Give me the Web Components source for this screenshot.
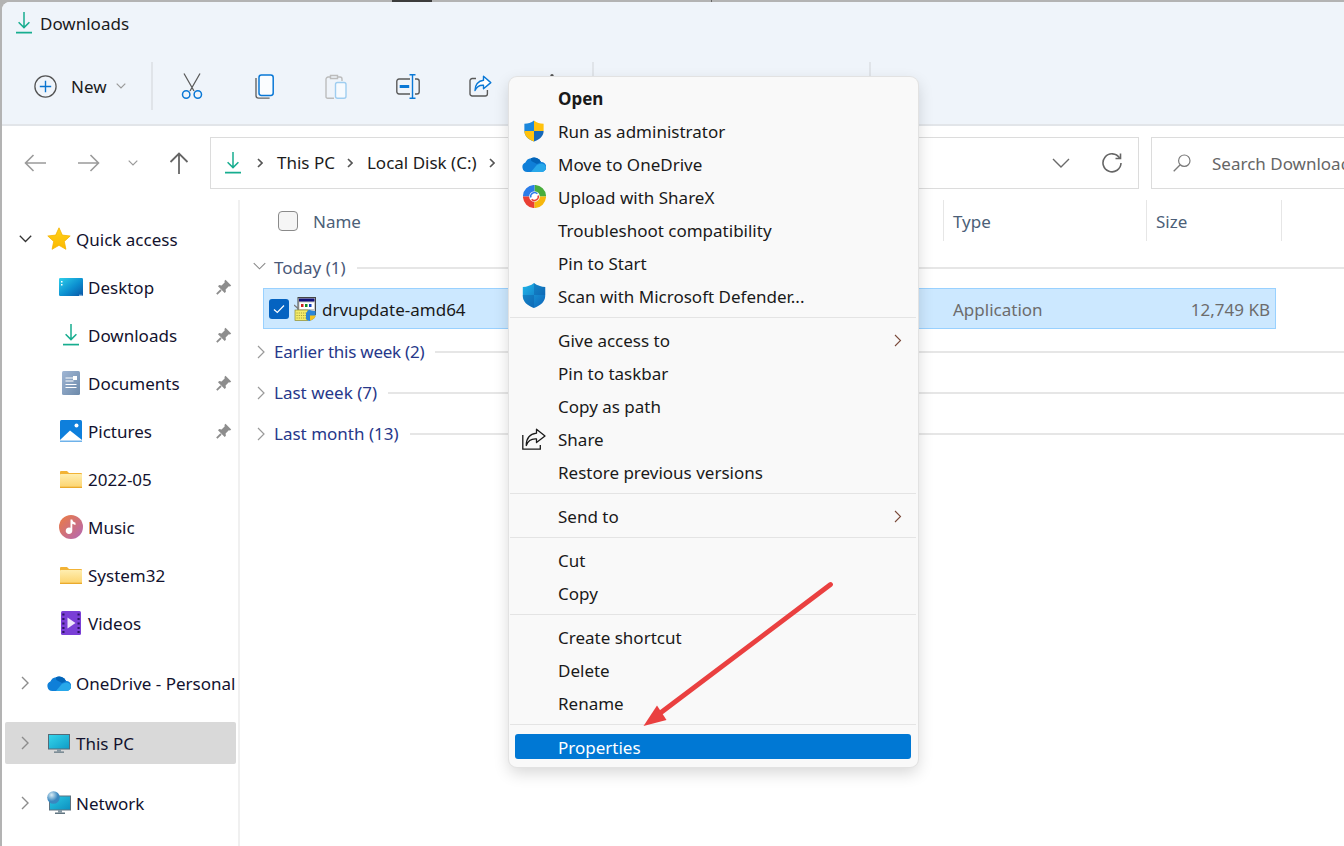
<!DOCTYPE html>
<html lang="en"><head><meta charset="utf-8"><title>Downloads</title>
<style>
html,body{margin:0;padding:0;background:#fff;overflow:hidden}
body{font-family:"Noto Sans","Open Sans",sans-serif;font-size:17px;color:#1a1a1a}
</style></head><body>
<win-window>
  <win-titlebar slot="top">Downloads</win-titlebar>
  <win-toolbar slot="top">
    <new-button>New</new-button>
    <tool-sep></tool-sep>
    <tool-button icon="cut"></tool-button>
    <tool-button icon="copy"></tool-button>
    <tool-button icon="paste"></tool-button>
    <tool-button icon="rename"></tool-button>
    <tool-button icon="share"></tool-button>
    <tool-button icon="dots"></tool-button>
    <tool-sep></tool-sep>
    <tool-gap></tool-gap>
    <tool-sep></tool-sep>
  </win-toolbar>
  <win-address slot="top"></win-address>
  <nav-tree slot="side">
    <tree-row level="0" exp="open" icon="star">Quick access</tree-row>
    <tree-row level="1" icon="desktop" pin>Desktop</tree-row>
    <tree-row level="1" icon="dl" pin>Downloads</tree-row>
    <tree-row level="1" icon="doc" pin>Documents</tree-row>
    <tree-row level="1" icon="pics" pin>Pictures</tree-row>
    <tree-row level="1" icon="folder">2022-05</tree-row>
    <tree-row level="1" icon="music">Music</tree-row>
    <tree-row level="1" icon="folder">System32</tree-row>
    <tree-row level="1" icon="video">Videos</tree-row>
    <tree-row level="0" exp="closed" icon="cloud" gap>OneDrive - Personal</tree-row>
    <tree-row level="0" exp="closed" icon="pc" gap selected>This PC</tree-row>
    <tree-row level="0" exp="closed" icon="net" gap>Network</tree-row>
  </nav-tree>
  <file-list slot="main">
    <list-header></list-header>
    <group-row open>Today (1)</group-row>
    <file-row name="drvupdate-amd64" type="Application" size="12,749 KB"></file-row>
    <group-row dark style="letter-spacing:-.24px">Earlier this week (2)</group-row>
    <group-row dark>Last week (7)</group-row>
    <group-row dark>Last month (13)</group-row>
  </file-list>
  <ctx-menu slot="over">
    <ctx-item bold>Open</ctx-item>
    <ctx-item icon="uac">Run as administrator</ctx-item>
    <ctx-item icon="cloud">Move to OneDrive</ctx-item>
    <ctx-item icon="sharex">Upload with ShareX</ctx-item>
    <ctx-item>Troubleshoot compatibility</ctx-item>
    <ctx-item>Pin to Start</ctx-item>
    <ctx-item icon="defender">Scan with Microsoft Defender...</ctx-item>
    <ctx-sep></ctx-sep>
    <ctx-item sub>Give access to</ctx-item>
    <ctx-item>Pin to taskbar</ctx-item>
    <ctx-item>Copy as path</ctx-item>
    <ctx-item icon="sharek">Share</ctx-item>
    <ctx-item>Restore previous versions</ctx-item>
    <ctx-sep></ctx-sep>
    <ctx-item sub>Send to</ctx-item>
    <ctx-sep></ctx-sep>
    <ctx-item>Cut</ctx-item>
    <ctx-item>Copy</ctx-item>
    <ctx-sep></ctx-sep>
    <ctx-item>Create shortcut</ctx-item>
    <ctx-item>Delete</ctx-item>
    <ctx-item>Rename</ctx-item>
    <ctx-sep></ctx-sep>
    <ctx-item active>Properties</ctx-item>
  </ctx-menu>
  <annot-arrow slot="over"></annot-arrow>
</win-window>
<script>
const ICONS={
dl:[16,22,`<path d="M8 0v15.5M2.6 10.2 8 15.6l5.4-5.4" fill="none" stroke="#17ad8f" stroke-width="1.5"/><path d="M0 20.6h16" stroke="#17ad8f" stroke-width="1.7"/>`],
plus:[23,23,`<circle cx="11.5" cy="11.5" r="10.6" fill="none" stroke="#555" stroke-width="1.3"/><path d="M11.5 5.8v11.4M5.8 11.5h11.4" stroke="#0a74cf" stroke-width="1.4"/>`],
cut:[22,26,`<path d="M3 0.5 13 18M19 0.5 9 18" fill="none" stroke="#5c5c5c" stroke-width="1.3"/><circle cx="5.2" cy="21.5" r="3.7" fill="none" stroke="#0a78d6" stroke-width="1.5"/><circle cx="16.8" cy="21.5" r="3.7" fill="none" stroke="#0a78d6" stroke-width="1.5"/>`],
copy:[19,25,`<path d="M1 4v17.5a2.6 2.6 0 0 0 2.6 2.6h11" fill="none" stroke="#666" stroke-width="1.4"/><rect x="4" y="1" width="14.2" height="20.5" rx="2.4" fill="#fbfdff" stroke="#0a78d6" stroke-width="1.5"/>`],
paste:[22,25,`<path d="M5 3H3.2A2.2 2.2 0 0 0 1 5.2v17.5A1.6 1.6 0 0 0 2.6 24.3H9" fill="none" stroke="#bcbcbc" stroke-width="1.4"/><path d="M5.5 1.5h7v3h-7zM12.5 3H15a2 2 0 0 1 2 2v2" fill="none" stroke="#bcbcbc" stroke-width="1.4"/><rect x="10.5" y="8.5" width="10.5" height="15.8" rx="2" fill="#f6fafe" stroke="#9fcdf0" stroke-width="1.4"/>`],
rename:[24,25,`<path d="M14 5H3a2.2 2.2 0 0 0-2.2 2.2v10.6A2.2 2.2 0 0 0 3 20h11M19 5h2a2.2 2.2 0 0 1 2.2 2.2v10.6A2.2 2.2 0 0 1 21 20h-2" fill="none" stroke="#5a5a5a" stroke-width="1.4"/><path d="M16.5 1v23M13.5 0.8h6M13.5 24.2h6" fill="none" stroke="#0a78d6" stroke-width="1.4"/><rect x="3.7" y="11" width="9.5" height="3" fill="#0a78d6"/>`],
share:[23,22,`<path d="M7 3.5H3.2A2.2 2.2 0 0 0 1 5.7v13A2.2 2.2 0 0 0 3.2 21h13a2.2 2.2 0 0 0 2.2-2.2V15" fill="none" stroke="#5a5a5a" stroke-width="1.4"/><path d="M14.5 1.2 21.8 7.6 14.5 13.8V10.3C10.5 10 7.6 11.8 6 15.6 5.8 10 9.2 5.6 14.5 5.2Z" fill="#fff" stroke="#0a78d6" stroke-width="1.4" stroke-linejoin="round"/>`],
dots:[6,24,`<circle cx="3" cy="1.8" r="1.7" fill="#555"/><circle cx="3" cy="12" r="1.7" fill="#555"/><circle cx="3" cy="22" r="1.7" fill="#555"/>`],
back:[22,18,`<path d="M22 9H1.5M9.5 1 1.5 9l8 8" fill="none" stroke="#9a9a9a" stroke-width="1.6"/>`],
fwd:[22,18,`<path d="M0 9h20.5M12.5 1l8 8-8 8" fill="none" stroke="#9a9a9a" stroke-width="1.6"/>`],
up:[20,22,`<path d="M10 22V1.5M1.5 10 10 1.5 18.500 10" fill="none" stroke="#666" stroke-width="1.8"/>`],
cd:[10,6,`<path d="M.7.7 5 5 9.300.7" fill="none" stroke="#9a9a9a" stroke-width="1.2"/>`],
cdl:[18,11,`<path d="M1 1l8 8 8-8" fill="none" stroke="#6a6a6a" stroke-width="1.4"/>`],
crumb:[6,10,`<path d="M1 1l4 4-4 4" fill="none" stroke="#555" stroke-width="1.6"/>`],
refresh:[20,20,`<path d="M17.600 5A9 9 0 1 0 19 10" fill="none" stroke="#666" stroke-width="1.6"/><path d="M18.500 .5V5.500H13.500" fill="none" stroke="#666" stroke-width="1.6"/>`],
search:[18,18,`<circle cx="11.300" cy="6.700" r="5.700" fill="none" stroke="#7a7a7a" stroke-width="1.200"/><path d="M7.200 10.800.7 17.300" stroke="#7a7a7a" stroke-width="1.300"/>`],
star:[24,24,`<defs><linearGradient id="a" x1="0" y1="0" x2="0" y2="1"><stop offset="0" stop-color="#ffd21c"/><stop offset="1" stop-color="#fbb800"/></linearGradient></defs><path d="M12 .8 15.300 8.100 23.200 9 17.300 14.400 18.900 22.300 12 18.300 5.100 22.300 6.700 14.400.8 9 8.700 8.100Z" fill="url(#a)" stroke="#f5b400" stroke-width=".8" stroke-linejoin="round"/>`],
desktop:[24,18,`<defs><linearGradient id="a" x1="0" y1="0" x2="1" y2="1"><stop offset="0" stop-color="#2fd0ea"/><stop offset=".55" stop-color="#0c8fd0"/><stop offset="1" stop-color="#0a55a5"/></linearGradient></defs><rect width="24" height="18" rx="1.200" fill="url(#a)"/><rect x="2" y="3" width="1.500" height="1.500" fill="#fff"/><rect x="2" y="6" width="1.500" height="1.500" fill="#fff"/><rect x="20" y="16.800" width="3" height=".8" fill="#cfe8f5"/>`],
doc:[18,24,`<defs><linearGradient id="a" x1="0" y1="0" x2="1" y2="1"><stop offset="0" stop-color="#a0b6d4"/><stop offset="1" stop-color="#6d8aaa"/></linearGradient></defs><rect width="18" height="24" rx="1.500" fill="url(#a)"/><path d="M3.500 7h8M3.500 10h8M3.500 13.500h11M3.500 16.500h11" stroke="#fff" stroke-width="1"/><rect x="11" y="5" width="4" height="4" fill="#fff"/>`],
pics:[22,22,`<rect width="22" height="22" rx="1.500" fill="#0e7fdc"/><circle cx="16.500" cy="5.500" r="2" fill="#fff"/><path d="M0 20 10 10.500 22 20v2H0Z" fill="#fff"/><path d="M0 20.500 0 22h22v-1.500Z" fill="#0e7fdc" opacity=".6"/>`],
folder:[22,17,`<defs><linearGradient id="a" x1="0" y1="0" x2="0" y2="1"><stop offset="0" stop-color="#ffeeb0"/><stop offset="1" stop-color="#fcd36c"/></linearGradient></defs><path d="M0 1a1 1 0 0 1 1-1h6l2 2h12a1 1 0 0 1 1 1v3H0Z" fill="#f2b336"/><rect y="3" width="22" height="14" rx=".8" fill="url(#a)"/><rect y="15.700" width="22" height="1.300" fill="#eaaa2c"/>`],
music:[24,24,`<defs><linearGradient id="a" x1="0" y1="0" x2="1" y2="1"><stop offset="0" stop-color="#ee7c3e"/><stop offset="1" stop-color="#b267b8"/></linearGradient></defs><circle cx="12" cy="12" r="12" fill="url(#a)"/><path d="M11.500 4.500h1.800c.3 2 1.600 2.800 3.200 3.200v2.200c-1.300 0-2.500-.4-3.200-1.200v7a3.300 3.300 0 1 1-1.800-2.900Z" fill="#fff"/>`],
video:[20,24,`<rect width="20" height="24" rx="1.500" fill="#7a3fd6"/><path d="M2.400 2.500v2M2.400 7v2M2.400 11.500v2M2.400 16v2M2.400 20v2M17.600 2.500v2M17.600 7v2M17.600 11.500v2M17.600 16v2M17.600 20v2" stroke="#2e1468" stroke-width="2.200"/><path d="M6.500 6.500v11L14.500 12Z" fill="#eee6fb"/>`],
cloud:[24,16,`<path d="M5.200 16A4.900 4.900 0 0 1 3.400 6.600 6.600 6.600 0 0 1 9 2.200 7.600 7.600 0 0 1 19 6 5 5 0 0 1 19.500 16Z" fill="#0f7fd8"/><path d="M9 2.200A7.600 7.600 0 0 1 19 6L15 8 9.300 5Z" fill="#0364b8"/><path d="M9 16 15 8.800 19 7.500A4.500 4.500 0 0 1 24 11.500 4.500 4.500 0 0 1 19.500 16Z" fill="#28a8ea"/>`],
pc:[22,19,`<defs><linearGradient id="a" x1="0" y1="0" x2="1" y2="1"><stop offset="0" stop-color="#35d6ec"/><stop offset="1" stop-color="#0f9bc6"/></linearGradient></defs><rect x=".5" y=".5" width="21" height="14.500" fill="url(#a)" stroke="#546b78"/><rect x="9" y="15" width="4" height="2.500" fill="#8498a3"/><rect x="6" y="17.500" width="10" height="1.300" fill="#667a86"/>`],
net:[24,24,`<defs><linearGradient id="a" x1="0" y1="0" x2="1" y2="1"><stop offset="0" stop-color="#2cc9e4"/><stop offset="1" stop-color="#0c8fbf"/></linearGradient><radialGradient id="b" cx=".35" cy=".3"><stop offset="0" stop-color="#d8ecf5"/><stop offset="1" stop-color="#3a87bf"/></radialGradient></defs><rect x="2.500" y="5" width="21" height="14" fill="url(#a)" stroke="#5f7280"/><rect x="11" y="19" width="4" height="2.500" fill="#8498a3"/><rect x="8" y="21.500" width="10" height="1.500" fill="#607480"/><circle cx="6.500" cy="6.500" r="6.300" fill="url(#b)"/>`],
pin:[16,16,`<path d="M9.500.8 15.200 6.500 14 7.600 12.800 7.200 9.600 10.400 9.900 12.800 8.700 14 2 7.300 3.200 6.100 5.600 6.400 8.800 3.200 8.400 2Z" fill="#8d8d8d"/><path d="M5 11 .8 15.200" stroke="#8d8d8d" stroke-width="1.800"/>`],
uac:[24,24,`<path d="M12 .5C9 3 5.500 3.800 1.500 4v8c0 5.500 4.500 9.500 10.500 11.500Z" fill="#1c87dc"/><path d="M12 .5c3 2.500 6.500 3.300 10.500 3.500v8H12Z" fill="#ffc20e"/><path d="M1.500 12H12v11.500C6 21.500 1.500 17.500 1.500 12Z" fill="#ffc20e"/><path d="M12 12h10.500c0 5.500-4.500 9.500-10.500 11.500Z" fill="#1668b8"/>`],
sharex:[24,24,`<g fill="none" stroke-width="6.500"><path d="M12 3.200A8.800 8.800 0 0 1 20.800 12" stroke="#47ad3c"/><path d="M3.200 12A8.800 8.800 0 0 1 12 3.200" stroke="#2b7de9"/><path d="M12 20.800A8.800 8.800 0 0 1 3.200 12" stroke="#ea3f33"/><path d="M20.800 12A8.800 8.800 0 0 1 12 20.800" stroke="#f6b70d"/></g><circle cx="12" cy="12" r="4.800" fill="#fff"/><path d="M8.200 13A4 4 0 0 1 15 9.200" fill="none" stroke="#2b7de9" stroke-width="1.500"/><path d="M15.800 11A4 4 0 0 1 9 14.800" fill="none" stroke="#ea3f33" stroke-width="1.500"/>`],
defender:[24,25,`<defs><linearGradient id="a" x1="0" y1="0" x2="1" y2="1"><stop offset="0" stop-color="#1fb5e8"/><stop offset="1" stop-color="#0d62b8"/></linearGradient></defs><path d="M12 0C9 2.500 5 3.800.8 4v9c0 5.500 4.500 9.500 11.200 12 6.700-2.500 11.200-6.500 11.200-12V4C19 3.800 15 2.500 12 0Z" fill="url(#a)"/><path d="M12 0v12H.8v1c0 5.500 4.500 9.500 11.200 12V12h11.200V4C19 3.800 15 2.500 12 0Z" fill="#0a4f9e" opacity=".35"/>`],
sharek:[24,22,`<path d="M.8 7v14.200h17.500V17" fill="none" stroke="#1a1a1a" stroke-width="1.300"/><path d="M14.500 1.200 23 8 14.500 14.500V11C9.500 10.600 6 12.600 4.300 17.500 4.200 10.500 8 6 14.500 5.200Z" fill="none" stroke="#1a1a1a" stroke-width="1.300" stroke-linejoin="round"/>`],
exe:[22,24,`<rect x="4" y=".5" width="17.500" height="17" fill="#c9c9c9" stroke="#444"/><rect x="5" y="1.500" width="15.500" height="3" fill="#10107a"/><rect x="5.500" y="5.500" width="14.500" height="6.500" fill="#fff"/><rect x="7" y="7" width="2.500" height="3" fill="#d02020"/><rect x="11" y="7" width="2.500" height="3" fill="#108a20"/><rect x="15" y="7" width="2.500" height="3" fill="#1040c0"/><rect x="1" y="13" width="13" height="10.500" fill="#f4ec6a" stroke="#8a8a30" stroke-width=".7"/><path d="M2.500 16h10M2.500 18.500h10M2.500 21h10" stroke="#a5a040" stroke-dasharray="1.200 1"/><path d="M15 12.500c2 1.200 4 1.500 6.500 1.500v4c0 3-2.500 4.800-6 6-1.500-.5-2.500-1-3.500-1.800V16Z" fill="#2a86d8"/><path d="M16 14v4.500h5.500v1c-.8 2-2.900 3.300-5.500 4.300Z" fill="#f6c21c"/><path d="M0 8l4 3.500" stroke="#777" stroke-width="1.200"/>`]
};
const ICON_SIZE={uac:[22,22],sharex:[23,23]};
function def(name,css,html){
  customElements.define(name,class extends HTMLElement{
    constructor(){super();this.attachShadow({mode:'open'})}
    connectedCallback(){
      this.shadowRoot.innerHTML=`<style>${css}</style>`+(typeof html==='function'?html(this):html);
    }
  });
}
const ic=(n,extra='')=>{const i=ICONS[n],s=ICON_SIZE[n]||i;return `<svg width="${s[0]}" height="${s[1]}" viewBox="0 0 ${i[0]} ${i[1]}" style="display:block;flex:none;${extra}" aria-hidden="true">${i[2]}</svg>`};

def('win-window',`
:host{display:block;position:relative;width:1344px;height:846px;overflow:hidden;background:#b3b3b3}
.frame{position:absolute;inset:2px 0 0 2px;border-top-left-radius:8px;background:#fff;display:flex;flex-direction:column;overflow:hidden}
.body{flex:1;display:grid;grid-template-columns:238px 1fr;min-height:0}
.tick{position:absolute;top:0;left:392px;width:40px;height:2px;background:#3c3c3c}
.tick2{position:absolute;top:0;left:711px;width:1px;height:2px;background:#666}
`,`<div class="tick"></div><div class="tick2"></div><div class="frame"><slot name="top"></slot><div class="body"><slot name="side"></slot><slot name="main"></slot></div></div><slot name="over"></slot>`);

def('win-titlebar',`
:host{display:flex;align-items:center;gap:8px;height:43px;padding:0 0 0 14px;background:#eff4fa;font-size:17px;color:#1b1b1b;box-sizing:border-box}
`,()=>ic('dl','margin-top:-2px')+`<slot></slot>`);

def('win-toolbar',`
:host{display:flex;align-items:center;height:81px;background:#eff4fa;border-bottom:2px solid #e2e5e9;box-sizing:border-box;padding-top:3px}
`,`<slot></slot>`);
def('new-button',`
:host{display:flex;align-items:center;width:145px;flex:none;padding-left:32px;box-sizing:border-box;font-size:17px;color:#1b1b1b}
span{margin-left:14px;margin-right:9px}
`,()=>ic('plus')+`<span><slot></slot></span>`+ic('cd'));
def('tool-sep',`:host{display:block;width:2px;height:48px;background:#e0e4e9;flex:none;margin:0 3px 0 4px}`,``);
def('tool-gap',`:host{display:block;width:268px;flex:none}`,``);
def('tool-button',`
:host{display:flex;align-items:center;justify-content:center;width:72px;height:48px;flex:none}
`,el=>ic(el.getAttribute('icon')));

def('win-address',`
:host{display:flex;align-items:center;height:74px;padding-left:22px;background:#fff;box-sizing:border-box;color:#1b1b1b;font-size:17px}
.nav{display:flex;align-items:center;width:186px;flex:none}
.box{display:flex;align-items:center;height:52px;border:1.5px solid #dcdcdc;box-sizing:border-box;background:#fff;flex:none}
.addr{width:929px;padding-left:14px}
.addr .t{margin-left:14px;margin-right:12px;white-space:nowrap;padding-bottom:2px}
.addr .r{margin-left:auto;display:flex;align-items:center;gap:32px;padding-right:16px}
.search{width:220px;margin-left:12px;padding-left:21px;color:#666;white-space:nowrap;overflow:hidden}
.search span{margin-left:21px}
`,()=>`<div class="nav">${ic('back')}<span style="width:32px"></span>${ic('fwd')}<span style="width:28px"></span>${ic('cd')}<span style="width:31px"></span>${ic('up')}</div>
<div class="box addr">${ic('dl','margin-right:16px')}${ic('crumb')}<span class="t">This PC</span>${ic('crumb')}<span class="t">Local Disk (C:)</span>${ic('crumb')}<div class="r">${ic('cdl')}${ic('refresh')}</div></div>
<div class="box search">${ic('search')}<span>Search Downloads</span></div>`);

def('nav-tree',`
:host{display:block;border-right:2px solid #f0f0f0;padding-top:15px;background:#fff;min-height:0;overflow:hidden}
`,`<slot></slot>`);
def('tree-row',`
:host{display:block;height:48px;padding:3px 2px 3px 3px;box-sizing:border-box;color:#12122e}
:host([gap]){margin-top:12px}
.r{display:flex;align-items:center;height:42px;border-radius:2px;position:relative}
:host([selected]) .r{background:#d9d9d9}
.e{width:40px;flex:none;display:flex;justify-content:center}
.i{flex:none;display:flex;justify-content:center;align-items:center}
.l1{padding-left:50px}
.l1 .i{width:31px}
.l0 .i{width:28px}
.l1 .txt{margin-left:2px}
.l0 .txt{margin-left:3px}
.pin{margin-left:auto;margin-right:4px}
.txt{white-space:nowrap}
`,el=>{
 const lvl=el.getAttribute('level'),exp=el.getAttribute('exp');
 const chev=exp==='open'?`<svg width="13" height="8" viewBox="0 0 13 8"><path d="M.8.8 6.500 6.500 12.200.8" fill="none" stroke="#333" stroke-width="1.300"/></svg>`:`<svg width="8" height="14" viewBox="0 0 8 14"><path d="M1 1l6 6-6 6" fill="none" stroke="#8c8c8c" stroke-width="1.400"/></svg>`;
 return `<div class="r l${lvl}">${lvl==='0'?`<div class="e">${chev}</div>`:''}<div class="i">${ic(el.getAttribute('icon'))}</div><div class="txt"><slot></slot></div>${el.hasAttribute('pin')?`<div class="pin">${ic('pin')}</div>`:''}</div>`});

def('file-list',`:host{display:block;min-height:0;overflow:hidden;background:#fff}`,`<slot></slot>`);
def('list-header',`
:host{display:grid;grid-template-columns:703px 203px 135px 1fr;height:41px;color:#4c5f78;margin-bottom:6px}
.c{display:flex;align-items:center;padding-left:9px;padding-top:2px;border-left:1.500px solid #e6e6e6;height:41px;box-sizing:border-box}
.c.f{border-left:0;padding-left:38px;padding-top:0}
.c.f span{padding-top:2px}
.b{width:20px;height:20px;box-sizing:border-box;border:1.500px solid #8a8a8a;border-radius:4px;background:#f5f5f5;margin-right:15px}
`,`<div class="c f"><div class="b"></div><span>Name</span></div><div class="c">Type</div><div class="c">Size</div><div class="c"></div>`);
def('group-row',`
:host{display:flex;align-items:center;height:41px;color:#4a5878;white-space:nowrap}
:host([dark]){color:#27388a}
.e{width:34px;flex:none;display:flex;justify-content:center;padding-left:13px;box-sizing:border-box}
.ln{flex:1;height:2px;background:#e6e6e6;margin-left:11px}
`,el=>`<div class="e">${el.hasAttribute('open')?`<svg style="margin-right:8px;margin-top:-3px" width="14" height="8" viewBox="0 0 14 8"><path d="M.8.8 7 7 13.200.8" fill="none" stroke="#8a8a8a" stroke-width="1.200"/></svg>`:`<svg style="margin-right:6px" width="8" height="14" viewBox="0 0 8 14"><path d="M1 1l6 6-6 6" fill="none" stroke="#9a9a9a" stroke-width="1.200"/></svg>`}</div><slot></slot><div class="ln"></div>`);
def('file-row',`
:host{display:grid;grid-template-columns:689px 1fr auto;align-items:center;height:41px;width:1013px;margin:0 0 2px 23px;box-sizing:border-box;background:#cce8ff;border:1px solid #99d1ff;padding-right:5px;color:#6c6c6c}
.n{display:flex;align-items:center;color:#1a1a1a;padding-left:5px}
.k{width:20px;height:20px;background:#0563c1;border-radius:3px;display:flex;align-items:center;justify-content:center;margin-right:5px}
.i{margin-right:6px}
.t{padding-top:2px}
`,el=>`<div class="n"><div class="k"><svg width="12" height="10" viewBox="0 0 12 10"><path d="M1 5.500 4.300 8.500 11 1.500" fill="none" stroke="#fff" stroke-width="1.200"/></svg></div><div class="i">${ic('exe')}</div><span class="t">${el.getAttribute('name')}</span></div><div class="t">${el.getAttribute('type')}</div><div class="t">${el.getAttribute('size')}</div>`);

def('ctx-menu',`
:host{position:absolute;left:509px;top:77px;width:409px;box-sizing:border-box;padding:5.500px 0 8.500px;background:#f9f9f9;border-radius:8px;box-shadow:0 0 0 1px #e2e2e2,0 6px 16px rgba(0,0,0,.16);color:#1a1a1a}
`,`<slot></slot>`);
def('ctx-item',`
:host{display:flex;align-items:center;height:33px;position:relative;white-space:nowrap;padding-left:49px}
:host([bold]){font-weight:700}
.t{display:block;padding-bottom:2px}
.i{position:absolute;left:13px;top:0;bottom:3px;width:24px;display:flex;align-items:center;justify-content:center}
.s{position:absolute;right:16px;top:9px}
:host([active]){height:25px;margin:8.500px 7px 0 6px;padding-left:43px;background:#0078d4;color:#fff;border-radius:3px;line-height:26px;align-items:flex-start}
:host([active]) .t{padding:1px 0 0}
`,el=>`${el.getAttribute('icon')?`<div class="i">${ic(el.getAttribute('icon'))}</div>`:''}<span class="t"><slot></slot></span>${el.hasAttribute('sub')?`<svg class="s" width="8" height="13" viewBox="0 0 8 13"><path d="M1 1l5.500 5.500L1 12" fill="none" stroke="#7a4a3a" stroke-width="1.100"/></svg>`:''}`);
def('ctx-sep',`:host{display:block;height:1px;background:#e4e4e4;margin:3.500px 2px 6.500px 1px}`,``);
def('annot-arrow',`:host{position:absolute;left:630px;top:570px;width:220px;height:170px;pointer-events:none}`,
`<svg width="220" height="170" viewBox="630 570 220 170"><path d="M830.500 584.500 655 717" stroke="#ea4040" stroke-width="4.800" stroke-linecap="round"/><path d="M643.500 726 657 705.500 666.500 720Z" fill="#ea4040"/></svg>`);
</script>
</body></html>
